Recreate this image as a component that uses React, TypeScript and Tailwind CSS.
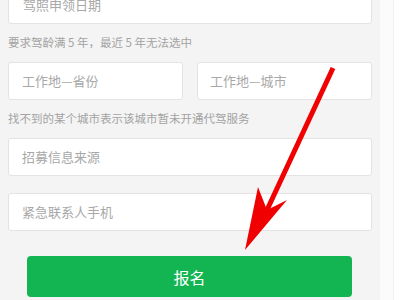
export default function App() {
  const box =
    'h-[38px] flex items-center bg-white border border-[#e6e2e4] rounded-[3px] text-[13px] text-[#a8a8a8]';
  const hint = 'h-[38px] flex items-center text-[11.5px] text-[#a3a3a3]';

  return (
    <div
      className="relative w-[400px] h-[300px] overflow-hidden flex bg-white"
      style={{ fontFamily: '"Noto Sans CJK SC", "Noto Sans", sans-serif' }}
    >
      <div className="w-[380px] h-full bg-[#f4f4f4] px-2 flex flex-col">
        <div className={`${box} -mt-[14px] pl-[14px]`}>驾照申领日期</div>
        <div className={hint}>要求驾龄满 5 年，最近 5 年无法选中</div>
        <div className="grid grid-cols-2 gap-[14px]">
          <div className={`${box} pl-[13px]`}>工作地—省份</div>
          <div className={`${box} pl-[12px]`}>工作地—城市</div>
        </div>
        <div className={hint}>找不到的某个城市表示该城市暂未开通代驾服务</div>
        <div className={`${box} pl-[13px]`}>招募信息来源</div>
        <div className={`${box} mt-[17px] pl-[13px]`}>紧急联系人手机</div>
        <button className="mt-[25px] ml-[19px] mr-[20px] h-[41px] rounded-[4px] bg-[#13b552] text-white text-[16px] flex items-center justify-center">
          报名
        </button>
      </div>
      <div className="w-[13px] h-full bg-[#fbfbfb]" />
      <div className="flex-1 h-full bg-white border-l border-[#f0f0f0]" />

      {/* red annotation arrow */}
      <svg className="absolute inset-0 pointer-events-none" width="400" height="300" viewBox="0 0 400 300">
        <line x1="333" y1="68" x2="267" y2="210" stroke="#f00000" strokeWidth="5" strokeLinecap="butt" />
        <polygon points="245,250 258,187 267,210 287,200" fill="#f00000" />
      </svg>
    </div>
  );
}
